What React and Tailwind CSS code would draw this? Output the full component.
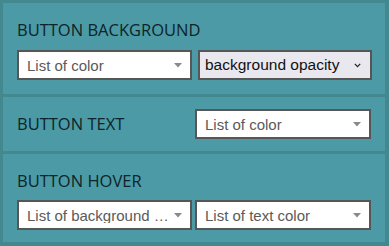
import React from 'react';

function Caret() {
  return (
    <svg width="8" height="5" viewBox="0 0 8 5" className="shrink-0">
      <path d="M0 0 L8 0 L4 4.5 Z" fill="#8a8a8a" />
    </svg>
  );
}

function ColorSelect({ label, className = '' }) {
  return (
    <div
      className={`h-[30px] flex items-center justify-between bg-white border-2 border-[#565656] pl-[8px] pr-[8px] ${className}`}
    >
      <span className="truncate text-[15px] text-[#5a5a5a] leading-none font-['Liberation_Sans',Arial,sans-serif]">
        {label}
      </span>
      <Caret />
    </div>
  );
}

function NativeSelect({ label, className = '' }) {
  return (
    <div
      className={`h-[30px] flex items-center justify-between bg-[#e9e8ee] border-2 border-[#565656] pl-[5px] pr-[9px] ${className}`}
    >
      <span className="text-[15.5px] text-[#111] leading-none font-['Liberation_Sans',Arial,sans-serif]">
        {label}
      </span>
      <svg width="7" height="5" viewBox="0 0 7 5" className="shrink-0">
        <path d="M0.8 0.8 L3.5 3.6 L6.2 0.8" fill="none" stroke="#222" strokeWidth="1.2" />
      </svg>
    </div>
  );
}

function Heading({ children }) {
  return (
    <h2 className="text-[16.5px] leading-[20px] text-[#0e2427] font-['Open_Sans','Segoe_UI',sans-serif]">
      {children}
    </h2>
  );
}

export default function App() {
  return (
    <div className="w-[389px] h-[246px] bg-[#43878f] pt-[3px] pl-[3px] pr-[4px] pb-[4px] flex flex-col gap-[3px]">
      {/* Button background */}
      <section className="h-[91px] bg-[#4b9aa6] pl-[14px] pt-[17px]">
        <Heading>BUTTON BACKGROUND</Heading>
        <div className="flex gap-[6px] mt-[10px]">
          <ColorSelect label="List of color" className="w-[175px]" />
          <NativeSelect label="background opacity" className="w-[174px]" />
        </div>
      </section>

      {/* Button text */}
      <section className="h-[54px] bg-[#4b9aa6] pl-[14px] pr-[14px] flex items-center justify-between">
        <Heading>BUTTON TEXT</Heading>
        <ColorSelect label="List of color" className="w-[176px]" />
      </section>

      {/* Button hover */}
      <section className="flex-1 bg-[#4b9aa6] pl-[14px] pt-[17px]">
        <Heading>BUTTON HOVER</Heading>
        <div className="flex gap-[3px] mt-[9px]">
          <ColorSelect label="List of background …" className="w-[175px]" />
          <ColorSelect label="List of text color" className="w-[176px]" />
        </div>
      </section>
    </div>
  );
}
